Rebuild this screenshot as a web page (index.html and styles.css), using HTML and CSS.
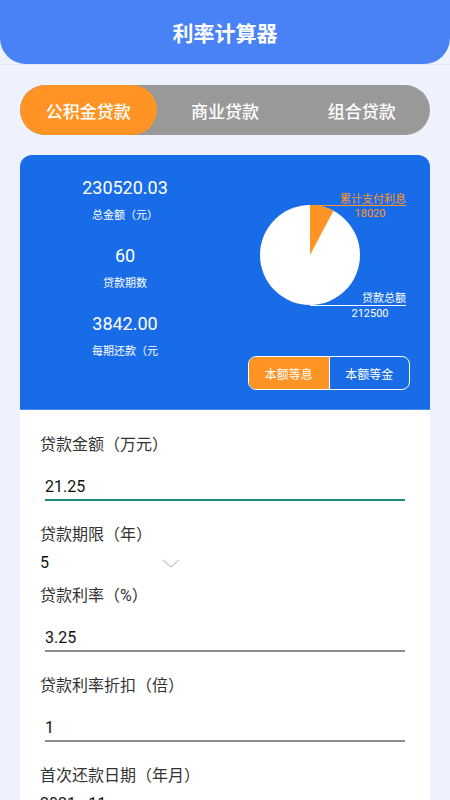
FILE: index.html
```html
<!DOCTYPE html>
<html lang="zh-CN">

<head>
   <meta charset="UTF-8">
   <meta name="viewport" content="width=device-width, initial-scale=1.0">
   <title>利率计算器</title>
   <link rel="stylesheet" href="styles.css">
</head>

<body>
   <header class="appbar">
      <div class="appbar-inner">利率计算器</div>
   </header>

   <main class="page">
      <nav class="tabs">
         <span class="tab active">公积金贷款</span>
         <span class="tab">商业贷款</span>
         <span class="tab">组合贷款</span>
      </nav>

      <section class="summary">
         <div class="stats">
            <div class="stat">
               <div class="stat-value">230520.03</div>
               <div class="stat-label">总金额（元）</div>
            </div>
            <div class="stat">
               <div class="stat-value">60</div>
               <div class="stat-label">贷款期数</div>
            </div>
            <div class="stat">
               <div class="stat-value">3842.00</div>
               <div class="stat-label">每期还款（元</div>
            </div>
         </div>

         <div class="chart-side">
            <svg class="chart" width="190" height="136" viewBox="0 0 190 136">
               <circle cx="70" cy="70" r="50" fill="#ffffff" />
               <path d="M70 70 L70 20 A50 50 0 0 1 93.47 25.85 Z" fill="#ff9424" />
               <line x1="70" y1="20.5" x2="166" y2="20.5" stroke="#ff9424" stroke-width="1.2" />
               <text x="166" y="18" text-anchor="end" class="chart-text orange">累计支付利息</text>
               <text x="130" y="32" text-anchor="middle" class="chart-text orange">18020</text>
               <line x1="70" y1="120.5" x2="166" y2="120.5" stroke="#ffffff" stroke-width="1.2" />
               <text x="166" y="117" text-anchor="end" class="chart-text">贷款总额</text>
               <text x="130" y="132" text-anchor="middle" class="chart-text">212500</text>
            </svg>

            <div class="switch">
               <span class="switch-item active">本额等息</span>
               <span class="switch-item">本额等金</span>
            </div>
         </div>
      </section>

      <section class="form">
         <div class="field-label">贷款金额（万元）</div>
         <div class="input focused">21.25</div>

         <div class="field-label">贷款期限（年）</div>
         <div class="spinner">
            <span>5</span>
            <svg width="18" height="9" viewBox="0 0 18 9"><path d="M1 1 L9 8 L17 1" fill="none" stroke="#c8c8c8" stroke-width="1.2" /></svg>
         </div>

         <div class="field-label">贷款利率（%）</div>
         <div class="input">3.25</div>

         <div class="field-label">贷款利率折扣（倍）</div>
         <div class="input">1</div>

         <div class="field-label">首次还款日期（年月）</div>
         <div class="spinner wide">
            <span>2021 - 11</span>
            <svg width="18" height="9" viewBox="0 0 18 9"><path d="M1 1 L9 8 L17 1" fill="none" stroke="#c8c8c8" stroke-width="1.2" /></svg>
         </div>
      </section>
   </main>
</body>

</html>
```

FILE: styles.css
```css
html,
body {
   margin: 0;
   padding: 0;
}

body {
   background-color: #edf2fd;
   font-family: Roboto, 'Noto Sans CJK SC', sans-serif;
   width: 450px;
   height: 800px;
   overflow: hidden;
}

.appbar {
   border-bottom: 1px solid #e2e6ee;
}

.appbar-inner {
   height: 64px;
   background-color: #4882f5;
   border-radius: 0 0 26px 26px;
   color: #fff;
   font-size: 21px;
   font-weight: bold;
   display: flex;
   align-items: center;
   justify-content: center;
}

.page {
   padding: 20px 20px 0;
}

.tabs {
   display: flex;
   height: 50px;
   border-radius: 25px;
   background-color: #999999;
   overflow: hidden;
}

.tab {
   flex: 1;
   display: flex;
   align-items: center;
   justify-content: center;
   color: #fff;
   font-size: 17px;
   font-weight: 500;
   border-radius: 25px;
}

.tab.active {
   background-color: #ff9424;
}

.summary {
   margin-top: 20px;
   height: 255px;
   box-sizing: border-box;
   background-color: #196ce8;
   border-radius: 12px 12px 0 0;
   border-bottom: 1px solid #4a8cf0;
   display: flex;
   color: #fff;
}

.stats {
   width: 210px;
   padding-top: 23px;
   text-align: center;
}

.stat {
   height: 68px;
}

.stat-value {
   font-size: 18px;
   line-height: 20px;
}

.stat-label {
   margin-top: 10px;
   font-size: 11px;
   line-height: 16px;
}

.chart-side {
   flex: 1;
   display: flex;
   flex-direction: column;
   align-items: flex-end;
   padding-top: 30px;
}

.chart-text {
   font-size: 11px;
   fill: #fff;
}

.chart-text.orange {
   fill: #ff9424;
}

.switch {
   margin: 35px 20px 0 0;
   width: 162px;
   height: 34px;
   box-sizing: border-box;
   border: 1.5px solid #fff;
   border-radius: 8px;
   overflow: hidden;
   display: flex;
}

.switch-item {
   flex: 1;
   display: flex;
   align-items: center;
   justify-content: center;
   font-size: 12px;
}

.switch-item + .switch-item {
   border-left: 1.5px solid #fff;
}

.switch-item.active {
   background-color: #ff9424;
}

.form {
   background-color: #fff;
   padding: 24px 20px 0;
   height: 420px;
}

.field-label {
   font-size: 16px;
   line-height: 22px;
   color: #333;
}

.input {
   margin: 20px 5px 23px;
   font-size: 16px;
   line-height: 22px;
   padding-bottom: 1px;
   color: #111;
   border-bottom: 2px solid #8c8c8c;
}

.input.focused {
   border-bottom-color: #1f8a78;
}

.spinner {
   margin: 6px 0 11px;
   width: 140px;
   display: flex;
   align-items: center;
   justify-content: space-between;
   font-size: 16px;
   line-height: 22px;
   color: #111;
}

.spinner.wide {
   width: 175px;
}
```
